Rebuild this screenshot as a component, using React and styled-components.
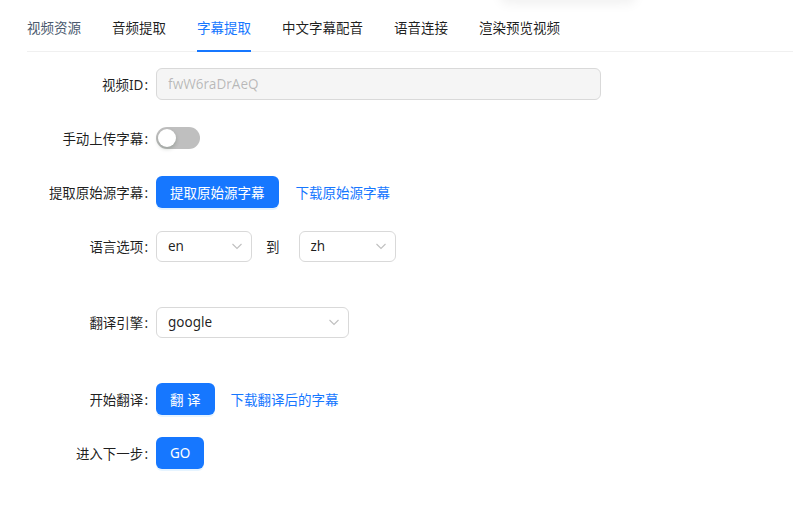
import React from "react"
import styled, { createGlobalStyle } from "styled-components"

const GlobalStyle = createGlobalStyle`
  html, body {
    margin: 0;
    padding: 0;
    background: #fff;
  }
  body {
    font-family: "Noto Sans", "Noto Sans CJK SC", sans-serif;
    color: rgba(0, 0, 0, 0.88);
  }
`

const Page = styled.div`
  position: relative;
  width: 800px;
  height: 516px;
  overflow: hidden;
  background: #fff;
`

const TopShadow = styled.div`
  position: absolute;
  top: -30px;
  left: 500px;
  width: 136px;
  height: 30px;
  border-radius: 8px;
  box-shadow: 0 4px 12px rgba(0, 0, 0, 0.06);
`

const TabBar = styled.div`
  display: flex;
  gap: 31px;
  margin: 5px 7px 0 27px;
  border-bottom: 1px solid #f0f0f0;
`

const Tab = styled.div`
  position: relative;
  padding: 12px 0;
  font-size: 13.5px;
  line-height: 22px;
  color: ${(p) => (p.$active ? "#1677ff" : p.$muted ? "#4b5a6e" : "rgba(0,0,0,0.88)")};

  &::after {
    content: "";
    display: ${(p) => (p.$active ? "block" : "none")};
    position: absolute;
    left: 0;
    right: 0;
    bottom: -1px;
    height: 2px;
    background: #1677ff;
  }
`

const Form = styled.div`
  display: flex;
  flex-direction: column;
  padding-top: 16px;
`

const Row = styled.div`
  display: flex;
  align-items: center;
  height: 32px;
  margin-bottom: ${(p) => p.$gap || 22}px;
`

const Label = styled.div`
  width: 148px;
  margin-right: 8px;
  text-align: right;
  font-size: 13.5px;
  white-space: nowrap;

  &::after {
    content: ":";
    margin-left: 1px;
  }
`

const Input = styled.div`
  box-sizing: border-box;
  width: 445px;
  height: 32px;
  padding: 0 11px;
  display: flex;
  align-items: center;
  background: #f5f5f5;
  border: 1px solid #d9d9d9;
  border-radius: 6px;
  font-size: 13.5px;
  color: rgba(0, 0, 0, 0.25);
`

const Switch = styled.div`
  position: relative;
  width: 44px;
  height: 22px;
  border-radius: 11px;
  background: #bfbfbf;

  &::before {
    content: "";
    position: absolute;
    top: 2px;
    left: 2px;
    width: 18px;
    height: 18px;
    border-radius: 50%;
    background: #fff;
    box-shadow: 0 2px 4px rgba(0, 35, 11, 0.2);
  }
`

const Button = styled.div`
  box-sizing: border-box;
  height: 32px;
  padding: 0 ${(p) => p.$pad || 14}px;
  display: flex;
  align-items: center;
  justify-content: center;
  background: #1677ff;
  border-radius: 6px;
  color: #fff;
  font-size: 13.5px;
  box-shadow: 0 2px 0 rgba(5, 145, 255, 0.1);
`

const Link = styled.span`
  margin-left: ${(p) => p.$ml || 16}px;
  color: #1677ff;
  font-size: 13.5px;
`

const Select = styled.div`
  box-sizing: border-box;
  width: ${(p) => p.$w}px;
  height: 31px;
  padding: 0 8px 0 11px;
  display: flex;
  align-items: center;
  justify-content: space-between;
  border: 1px solid #d9d9d9;
  border-radius: 6px;
  font-size: 13.5px;
  color: rgba(0, 0, 0, 0.88);
`

const To = styled.span`
  margin: 0 19px 0 14px;
  font-size: 13.5px;
`

const Chevron = () => (
  <svg width="12" height="12" viewBox="0 0 12 12" fill="none">
    <path d="M1.5 4 L6 8.5 L10.5 4" stroke="rgba(0,0,0,0.25)" strokeWidth="1.1" />
  </svg>
)

const tabs = ["视频资源", "音频提取", "字幕提取", "中文字幕配音", "语音连接", "渲染预览视频"]

const App = () => (
  <Page>
    <GlobalStyle />
    <TopShadow />
    <TabBar>
      {tabs.map((t, i) => (
        <Tab key={t} $active={i === 2} $muted={i === 0}>
          {t}
        </Tab>
      ))}
    </TabBar>

    <Form>
      <Row>
        <Label>视频ID</Label>
        <Input>fwW6raDrAeQ</Input>
      </Row>
      <Row>
        <Label>手动上传字幕</Label>
        <Switch />
      </Row>
      <Row>
        <Label>提取原始源字幕</Label>
        <Button $pad={14}>提取原始源字幕</Button>
        <Link $ml={17}>下载原始源字幕</Link>
      </Row>
      <Row $gap={44}>
        <Label>语言选项</Label>
        <Select $w={96}>
          en
          <Chevron />
        </Select>
        <To>到</To>
        <Select $w={97}>
          zh
          <Chevron />
        </Select>
      </Row>
      <Row $gap={45}>
        <Label>翻译引擎</Label>
        <Select $w={193}>
          google
          <Chevron />
        </Select>
      </Row>
      <Row>
        <Label>开始翻译</Label>
        <Button $pad={14}>翻 译</Button>
        <Link $ml={16}>下载翻译后的字幕</Link>
      </Row>
      <Row>
        <Label>进入下一步</Label>
        <Button $pad={14}>GO</Button>
      </Row>
    </Form>
  </Page>
)

export default App
